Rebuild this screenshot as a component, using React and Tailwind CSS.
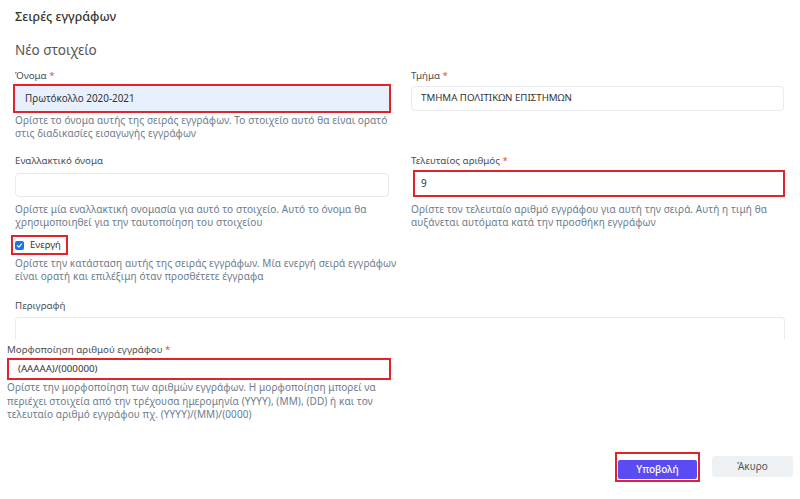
const FONT = { fontFamily: '"Noto Sans", "Open Sans", sans-serif' };

function Label({ children, required }) {
  return (
    <div className="text-[9.75px] leading-[14px] text-[#4b4f55]">
      {children}
      {required && <span className="text-[#e5484d]"> *</span>}
    </div>
  );
}

function Help({ children }) {
  return <p className="text-[10px] leading-[13px] tracking-[0.1px] text-[#6c7c8c]">{children}</p>;
}

export default function App() {
  return (
    <div style={FONT} className="w-[800px] h-[499px] bg-white overflow-hidden px-[15px] pt-[9px] relative">
      <h1 className="text-[12.5px] leading-[16px] font-medium text-[#333]">Σειρές εγγράφων</h1>
      <h2 className="mt-[16px] text-[13.5px] leading-[18px] text-[#555]">Νέο στοιχείο</h2>

      <div className="mt-[10px] flex gap-[22px] items-start">
        <div className="w-[374px]">
          <Label required>Όνομα</Label>
          <div className="mt-px -mx-[2px] border-2 border-[#e1242c]">
            <div className="h-[25px] rounded-[3px] bg-[#e8f0fe] flex items-center pl-[10px] text-[9.9px] text-[#333]">
              Πρωτόκολλο 2020-2021
            </div>
          </div>
          <div className="mt-[1px]">
            <Help>
              Ορίστε το όνομα αυτής της σειράς εγγράφων. Το στοιχείο αυτό θα είναι ορατό στις διαδικασίες εισαγωγής εγγράφων
            </Help>
          </div>
        </div>
        <div className="w-[373px]">
          <Label required>Τμήμα</Label>
          <div className="mt-[3px] h-[25px] rounded-[4px] border border-[#e8eaed] flex items-center pl-[9px] text-[9.7px] text-[#333]">
            ΤΜΗΜΑ ΠΟΛΙΤΙΚΩΝ ΕΠΙΣΤΗΜΩΝ
          </div>
        </div>
      </div>

      <div className="mt-[14px] flex gap-[22px] items-start">
        <div className="w-[374px]">
          <Label>Εναλλακτικό όνομα</Label>
          <div className="mt-[5px] h-[24px] rounded-[4px] border border-[#e8eaed]" />
          <div className="mt-[6px]">
            <Help>
              Ορίστε μία εναλλακτική ονομασία για αυτό το στοιχείο. Αυτό το όνομα θα χρησιμοποιηθεί για την ταυτοποίηση του στοιχείου
            </Help>
          </div>
        </div>
        <div className="w-[373px]">
          <Label required>Τελευταίος αριθμός</Label>
          <div className="mt-[2px] ml-[2px] -mr-[1px] border-2 border-[#e1242c]">
            <div className="h-[23px] flex items-center pl-[6px] text-[10px] text-[#333]">9</div>
          </div>
          <div className="mt-[6px]">
            <Help>
              Ορίστε τον τελευταίο αριθμό εγγράφου για αυτή την σειρά. Αυτή η τιμή θα αυξάνεται αυτόματα κατά την προσθήκη εγγράφων
            </Help>
          </div>
        </div>
      </div>

      <div className="w-[384px] mt-[6px]">
        <div className="-ml-[4px] w-[57px] h-[20px] border-2 border-[#e1242c] flex items-center gap-[6px] pl-[2px]">
          <span className="w-[9px] h-[9px] rounded-[2px] bg-[#1a73e8] flex items-center justify-center">
            <svg viewBox="0 0 10 10" className="w-[7px] h-[7px]">
              <path d="M2 5.2 L4.1 7.2 L8 2.8" fill="none" stroke="white" strokeWidth="1.6" strokeLinecap="round" strokeLinejoin="round" />
            </svg>
          </span>
          <span className="text-[9.5px] text-[#333]">Ενεργή</span>
        </div>
        <div className="mt-[2px]">
          <Help>
            Ορίστε την κατάσταση αυτής της σειράς εγγράφων. Μία ενεργή σειρά εγγράφων είναι ορατή και επιλέξιμη όταν προσθέτετε έγγραφα
          </Help>
        </div>
      </div>

      <div className="mt-[16px]">
        <Label>Περιγραφή</Label>
        <div className="mt-[4px] h-[22px] rounded-t-[4px] border border-b-0 border-[#e8eaed]" />
      </div>

      <div className="mt-[4px] -ml-[8px] w-[384px]">
        <Label required>Μορφοποίηση αριθμού εγγράφου</Label>
        <div className="mt-px border-2 border-[#e1242c] h-[22px] flex items-center pl-[9px] text-[9.7px] text-[#333]">
          (AAAAA)/(000000)
        </div>
        <div className="mt-[1px]">
          <p className="text-[10px] leading-[13.5px] tracking-[0.1px] text-[#6c7c8c]">
            Ορίστε την μορφοποίηση των αριθμών εγγράφων. Η μορφοποίηση μπορεί να περιέχει στοιχεία από την τρέχουσα ημερομηνία (YYYY), (MM), (DD) ή και τον τελευταίο αριθμό εγγράφου πχ. (YYYY)/(MM)/(0000)
          </p>
        </div>
      </div>

      <div className="mt-[30px] -mr-[8px] flex justify-end items-center gap-[12px]">
        <div className="border-2 border-[#e1242c] p-px">
          <button className="w-[79px] h-[19px] bg-[#5b4bf2] text-white text-[10px] font-medium rounded-[2px]">
            Υποβολή
          </button>
        </div>
        <button className="w-[81px] h-[21px] bg-[#eef1f4] text-[#555] text-[10px] rounded-[3px]">Άκυρο</button>
      </div>
    </div>
  );
}
